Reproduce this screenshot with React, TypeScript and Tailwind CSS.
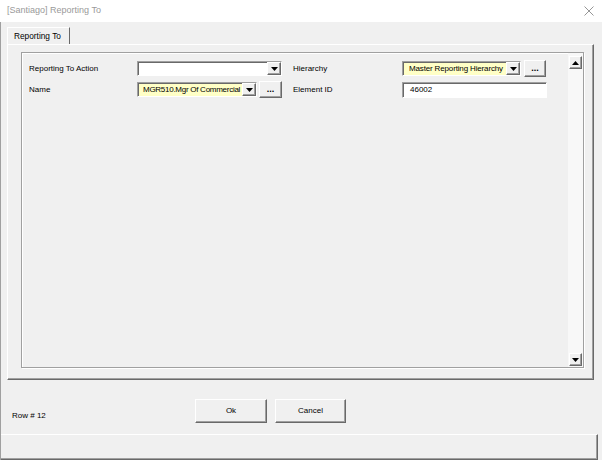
const raised =
  'border border-t-white border-l-white border-r-[#696969] border-b-[#696969] shadow-[inset_-1px_-1px_0_#a0a0a0]';
const sunken =
  'border border-t-[#a0a0a0] border-l-[#a0a0a0] border-r-white border-b-white shadow-[inset_1px_1px_0_#696969]';

function Arrow({ up = false }: { up?: boolean }) {
  return (
    <svg width="7" height="4" viewBox="0 0 7 4">
      {up ? <polygon points="0,4 7,4 3.5,0" fill="#000" /> : <polygon points="0,0 7,0 3.5,4" fill="#000" />}
    </svg>
  );
}

function DropButton() {
  return (
    <div className={`w-[14px] h-full shrink-0 bg-[#f0f0f0] flex items-center justify-center ${raised}`}>
      <Arrow />
    </div>
  );
}

function Combo({
  width,
  value,
  yellow,
  textClass = 'pl-[6px] tracking-[-0.15px]',
}: {
  width: string;
  value?: string;
  yellow?: boolean;
  textClass?: string;
}) {
  return (
    <div className={`${width} h-[15px] flex ${sunken} ${yellow ? 'bg-[#ffffc6]' : 'bg-white'}`}>
      <div className={`flex-1 min-w-0 overflow-hidden whitespace-nowrap leading-[13px] ${textClass}`}>{value}</div>
      <DropButton />
    </div>
  );
}

function Ellipsis({ width }: { width: string }) {
  return (
    <div
      className={`${width} h-[17px] shrink-0 bg-[#f0f0f0] flex items-end justify-center pb-[3px] leading-none text-[9px] font-bold ${raised}`}
    >
      ...
    </div>
  );
}

export default function App() {
  return (
    <div className="w-[602px] h-[460px] bg-[#f0f0f0] flex flex-col overflow-hidden font-['Liberation_Sans',Arial,sans-serif] text-[8px] text-black">
      {/* Title bar */}
      <div className="h-[22px] shrink-0 bg-white flex items-center justify-between pl-[7px] pr-[8px]">
        <span className="text-[9px] text-[#9a9a9a]">[Santiago] Reporting To</span>
        <svg width="10" height="10" viewBox="0 0 10 10">
          <path d="M0.5 0.5 L9.5 9.5 M9.5 0.5 L0.5 9.5" stroke="#8a8a8a" strokeWidth="0.9" />
        </svg>
      </div>

      <div className="flex-1 flex flex-col border-l border-[#a0a0a0]">
        {/* Tab */}
        <div className="mt-[5px] ml-[6px] w-[63px] h-[17px] flex items-center pl-[6px] text-[8.3px] border-t border-l border-r border-t-white border-l-white border-r-[#696969]">
          Reporting To
        </div>

        {/* Tab page */}
        <div className={`ml-[6px] w-[587px] h-[336px] shrink-0 pl-[13px] pt-[7px] ${raised}`}>
          <div className="w-[563px] h-[316px] flex border border-[#a0a0a0] shadow-[inset_1px_1px_0_#fff,1px_1px_0_#fff]">
            <div className="flex-1 pl-[7px] pt-[7px] flex flex-col gap-[4px]">
              <div className="h-[17px] flex items-center">
                <span className="w-[108px] shrink-0">Reporting To Action</span>
                <Combo width="w-[145px]" />
                <span className="w-[11px] shrink-0" />
                <span className="w-[109px] shrink-0">Hierarchy</span>
                <Combo width="w-[119px]" value="Master Reporting Hierarchy" yellow />
                <span className="w-[3px] shrink-0" />
                <Ellipsis width="w-[22px]" />
              </div>
              <div className="h-[17px] flex items-center">
                <span className="w-[108px] shrink-0">Name</span>
                <Combo
                  width="w-[120px]"
                  value="MGR510.Mgr Of Commercial"
                  yellow
                  textClass="pl-[5px] tracking-[-0.27px]"
                />
                <span className="w-[2px] shrink-0" />
                <Ellipsis width="w-[23px]" />
                <span className="w-[11px] shrink-0" />
                <span className="w-[109px] shrink-0">Element ID</span>
                <div className={`w-[145px] h-[16px] bg-white pl-[7px] leading-[14px] ${sunken}`}>46002</div>
              </div>
            </div>
            {/* Scrollbar */}
            <div className="w-[15px] shrink-0 bg-[#f8f8f8] flex flex-col justify-between items-center pt-[3px] pb-[1px]">
              <div className={`w-[13px] h-[13px] bg-[#f0f0f0] flex items-center justify-center ${raised}`}>
                <Arrow up />
              </div>
              <div className={`w-[13px] h-[13px] bg-[#f0f0f0] flex items-center justify-center ${raised}`}>
                <Arrow />
              </div>
            </div>
          </div>
        </div>

        {/* Buttons row */}
        <div className="mt-[19px] h-[24px] shrink-0 flex items-center">
          <span className="w-[194px] shrink-0 pl-[11px] pt-[10px]">Row # 12</span>
          <div className={`w-[72px] h-[24px] bg-[#f0f0f0] flex items-center justify-center ${raised}`}>Ok</div>
          <span className="w-[8px] shrink-0" />
          <div className={`w-[71px] h-[24px] bg-[#f0f0f0] flex items-center justify-center ${raised}`}>Cancel</div>
        </div>

        {/* Bottom strip */}
        <div className="mt-[11px] mr-[4px] flex-1 border-t border-r border-b border-t-white border-r-[#696969] border-b-[#696969] shadow-[inset_-1px_-1px_0_#a0a0a0]" />
      </div>
    </div>
  );
}
